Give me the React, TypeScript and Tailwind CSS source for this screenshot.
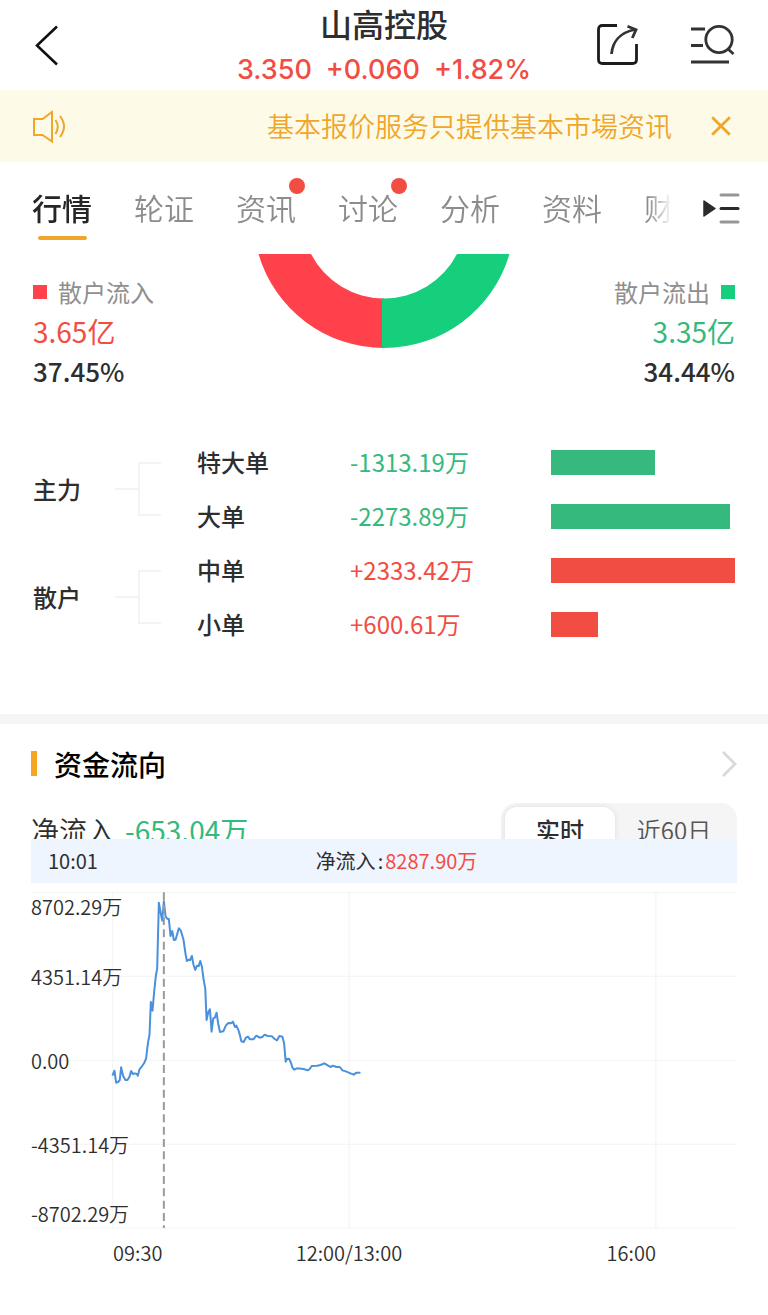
import React from "react";

type Tab = { label: string; active?: boolean; dot?: boolean };

const tabs: Tab[] = [
  { label: "行情", active: true },
  { label: "轮证" },
  { label: "资讯", dot: true },
  { label: "讨论", dot: true },
  { label: "分析" },
  { label: "资料" },
  { label: "财务" },
];

type Order = { group?: string; name: string; value: number };

const orders: Order[] = [
  { group: "主力", name: "特大单", value: -1313.19 },
  { name: "大单", value: -2273.89 },
  { group: "散户", name: "中单", value: 2333.42 },
  { name: "小单", value: 600.61 },
];

const maxOrder = 2333.42;

const flowLine =
  "277,587 283,572 288,608 294,606 299,600 303,562 309,588 316,600 322,600 328,590 333,573 338,582 344,580 350,582 353,587 358,568 366,558 372,549 378,535 381,508 384,485 388,465 392,366 397,392 402,335 407,288 411,265 416,68 421,96 426,122 431,64 436,108 441,116 446,117 451,168 456,153 461,180 466,179 476,145 482,152 490,180 496,222 500,243 505,239 510,240 515,228 520,255 525,270 530,257 535,259 540,243 545,260 550,298 555,325 559,420 564,397 569,388 574,455 579,415 584,413 589,398 594,432 599,456 609,454 617,436 624,429 632,430 638,425 644,441 648,437 655,452 659,466 663,484 670,486 677,473 683,470 689,478 699,478 708,467 718,473 726,471 733,464 742,468 755,469 763,477 770,481 777,468 786,470 791,488 796,545 800,537 806,536 812,549 816,562 821,569 830,565 850,567 862,571 868,567 874,558 890,557 900,555 912,550 922,556 930,561 938,557 948,561 958,561 966,571 978,575 990,580 1000,584 1008,578 1020,578";

function Header() {
  return (
    <header className="flex h-[90px] items-center justify-between pr-8 pl-8">
      <div className="flex w-36 justify-start">
        <button aria-label="返回" className="flex">
          <svg width="28" height="44" viewBox="0 0 28 44" fill="none" stroke="#111" strokeWidth="2.600">
            <path d="M25 3.500 L5 22.500 L25 41.500" />
          </svg>
        </button>
      </div>
      <div className="flex flex-col items-center self-start pt-0.5 whitespace-nowrap">
        <h1 className="text-[32px] leading-[42px] font-medium text-[#2e2e2e]">山高控股</h1>
        <p className="mt-1.5 flex gap-3.5 font-[Inter] text-[27px] leading-10 font-medium text-[#f24d43]">
          <span>3.350</span>
          <span>+0.060</span>
          <span>+1.82%</span>
        </p>
      </div>
      <div className="flex w-36 justify-end gap-[50px]">
        <button aria-label="分享" className="flex">
          <svg width="44" height="44" viewBox="0 0 44 44" fill="none" stroke="#1c1c1c" strokeWidth="2.800">
            <path d="M21 2.500 H6.500 Q2.500 2.500 2.500 6.500 V36.500 Q2.500 40.500 6.500 40.500 H36.500 Q40.500 40.500 40.500 36.500 V21" />
            <path d="M15.500 31 C16.500 19 24 9.500 39 6.500" stroke="#333" />
            <path d="M31.500 3.300 L40 6.700 L36.300 15" stroke="#333" />
          </svg>
        </button>
        <button aria-label="搜索" className="flex">
          <svg width="46" height="44" viewBox="0 0 46 44" fill="none" stroke="#333" strokeWidth="2.800">
            <path d="M1 6 H15 M1 22.500 H13 M1 39 H39" />
            <circle cx="29" cy="16.500" r="13.200" />
            <path d="M38 26 L43.500 31" />
          </svg>
        </button>
      </div>
    </header>
  );
}

function Notice() {
  return (
    <div className="flex h-[72px] items-center bg-[#fdfbe8] pr-[33px] pl-8 text-[#f0a52b]">
      <svg width="36" height="34" viewBox="0 0 36 34" fill="none" stroke="currentColor" strokeWidth="2" className="shrink-0">
        <path d="M2 10 H10.500 L20 3 V32.500 L10.500 26 H2 Z" />
        <path d="M23.500 11 Q28 17.500 23.500 25 M28 7 Q36 17.500 28 28" />
      </svg>
      <p className="flex-1 text-right text-[27px] leading-10 font-[350] whitespace-nowrap">基本报价服务只提供基本市場资讯</p>
      <button aria-label="关闭" className="ml-[35px] flex w-7 shrink-0 justify-center">
        <svg width="20" height="20" viewBox="0 0 20 20" fill="none" stroke="currentColor" strokeWidth="2.800">
          <path d="M1.200 1.200 L18.800 18.800 M18.800 1.200 L1.200 18.800" />
        </svg>
      </button>
    </div>
  );
}

function Tabs() {
  return (
    <div className="flex h-[92px] items-stretch justify-between pr-7 pl-8">
      <nav className="flex min-w-0 flex-1 gap-[42px] overflow-hidden [mask-image:linear-gradient(to_right,black_calc(100%_-_24px),transparent)]">
        {tabs.map((tab) => (
          <button
            key={tab.label}
            className={
              tab.active
                ? "relative flex shrink-0 flex-col items-center pt-[22px] text-[30px] leading-[46px] font-medium text-[#262626]"
                : "relative flex shrink-0 flex-col items-center pt-[22px] text-[30px] leading-[46px] font-[350] text-[#8c8c8c]"
            }
          >
            {tab.label}
            {tab.active && <span className="mt-1.5 h-1 w-[49px] rounded-full bg-[#f0a52b]" />}
            {tab.dot && <span className="absolute top-4 right-[-9px] size-4 rounded-full bg-[#f24d43]" />}
          </button>
        ))}
      </nav>
      <button aria-label="更多栏目" className="ml-[30px] flex shrink-0 items-start pt-7">
        <svg width="38" height="36" viewBox="0 0 38 36" fill="none" strokeWidth="3" strokeLinecap="round">
          <path d="M2 11 L13 18.500 L2 26 Z" fill="#2b2b2b" stroke="#2b2b2b" strokeWidth="1.500" strokeLinejoin="round" />
          <path d="M19 5 H36 M19 32 H36" stroke="#969696" />
          <path d="M19 18.500 H36" stroke="#2b2b2b" />
        </svg>
      </button>
    </div>
  );
}

function Summary() {
  return (
    <section className="flex items-start justify-between px-[33px]">
      <div className="flex w-44 flex-col pt-[19px]">
        <div className="flex items-center gap-[11px] text-2xl leading-[38px] text-[#8f8f8f]">
          <span className="size-3.5 bg-[#ff414b]" />
          散户流入
        </div>
        <strong className="text-[28px] leading-10 font-normal text-[#f24d43]">3.65亿</strong>
        <span className="text-[26px] leading-10 font-medium text-[#2e2e2e]">37.45%</span>
      </div>
      <svg width="252" height="94" viewBox="0 0 252 94" className="shrink-0">
        <path d="M0.500 0 A130.8 130.8 0 0 0 126 94 V44.500 A82 82 0 0 1 53 0 Z" fill="#ff414b" />
        <path d="M251.500 0 A130.8 130.8 0 0 1 126 94 H124 V44.500 H126 A82 82 0 0 0 199 0 Z" fill="#15cf7d" />
      </svg>
      <div className="flex w-44 flex-col items-end pt-[19px]">
        <div className="flex items-center gap-[11px] text-2xl leading-[38px] text-[#8f8f8f]">
          散户流出
          <span className="size-3.5 bg-[#15cf7d]" />
        </div>
        <strong className="text-[28px] leading-10 font-normal text-[#35b97c]">3.35亿</strong>
        <span className="text-[26px] leading-10 font-medium text-[#2e2e2e]">34.44%</span>
      </div>
    </section>
  );
}

function Orders() {
  return (
    <section className="px-[33px] pt-11 pb-[63px]">
      <table className="w-full table-fixed text-2xl text-[#2e2e2e]">
        <colgroup>
          <col className="w-[82px]" />
          <col className="w-[82px]" />
          <col className="w-[153px]" />
          <col className="w-[201px]" />
          <col />
        </colgroup>
        <tbody>
          {orders.map((o) => (
            <tr key={o.name} className="h-[54px]">
              {o.group && (
                <>
                  <th rowSpan={2} scope="rowgroup" className="p-0 text-left font-medium">
                    {o.group}
                  </th>
                  <td rowSpan={2} className="p-0">
                    <div className="flex items-center">
                      <span className="h-0.5 w-[23px] bg-[#f3f3f3]" />
                      <span className="h-[54px] w-[23px] border-2 border-r-0 border-[#f3f3f3]" />
                    </div>
                  </td>
                </>
              )}
              <th scope="row" className="p-0 text-left font-medium">
                {o.name}
              </th>
              <td className={o.value < 0 ? "p-0 text-[#35b97c]" : "p-0 text-[#f24d43]"}>
                {(o.value > 0 ? "+" : "") + o.value.toFixed(2)}万
              </td>
              <td className="p-0">
                <div
                  className={o.value < 0 ? "h-[25px] bg-[#35b97c]" : "h-[25px] bg-[#f24d43]"}
                  style={{ width: `${(Math.abs(o.value) / maxOrder) * 100}%` }}
                />
              </td>
            </tr>
          ))}
        </tbody>
      </table>
    </section>
  );
}

function FlowChart() {
  return (
    <div className="mt-[9px]">
      <div className="relative">
        <svg className="absolute inset-0 h-full w-full overflow-visible" viewBox="33 36 2115 1008" preserveAspectRatio="none" fill="none">
          <path
            d="M33 37 H2148 M33 289 H2148 M33 541 H2148 M33 793 H2148 M33 1044 H2148 M278 37 V1044 M986 37 V1044 M1905 37 V1044"
            stroke="#f3f3f3"
            strokeWidth="3"
          />
          <polyline points={flowLine} stroke="#4a90dc" strokeWidth="6" strokeLinejoin="round" />
          <path d="M431 37 V1044" stroke="#9a9a9a" strokeWidth="6" strokeDasharray="24 13" />
        </svg>
        <div className="relative grid grid-rows-[30px_110px_58px_110px_28px] items-center text-xl leading-7 font-[350] text-[#2e2e2e]">
          <span>8702.29万</span>
          <span>4351.14万</span>
          <span>0.00</span>
          <span>-4351.14万</span>
          <span>-8702.29万</span>
        </div>
      </div>
      <div className="grid grid-cols-[82fr_130fr_211fr_201fr_81fr] pt-[11px] text-xl leading-7 font-[350] whitespace-nowrap text-[#2e2e2e]">
        <span className="col-start-2">09:30</span>
        <span className="text-center">12:00/13:00</span>
        <span className="text-right">16:00</span>
      </div>
    </div>
  );
}

function CapitalFlow() {
  return (
    <section className="border-t-10 border-[#f5f5f5] px-[31px] pb-11">
      <a href="#flow" className="flex h-[79px] items-center">
        <span className="h-[25px] w-1.5 bg-[#f5a623]" />
        <h2 className="ml-[17px] flex-1 text-[28px] leading-10 font-medium text-black">资金流向</h2>
        <svg width="16" height="28" viewBox="0 0 16 28" fill="none" stroke="#d9d9d9" strokeWidth="2.800">
          <path d="M2 2 L14 14 L2 26" />
        </svg>
      </a>
      <div className="flex h-[54px] items-center justify-between">
        <p className="flex gap-2.5 text-[28px] leading-10 whitespace-nowrap">
          <span className="font-[350] text-[#2e2e2e]">净流入</span>
          <span className="text-[#35b97c]">-653.04万</span>
        </p>
        <div className="flex h-[54px] w-[236px] rounded-2xl bg-[#f5f5f5] p-1 text-2xl">
          <button className="h-[46px] w-[110px] rounded-xl bg-white font-medium text-[#2e2e2e] shadow-[0_0_6px_#00000018]">
            实时
          </button>
          <button className="flex-1 font-[350] text-[#555]">近60日</button>
        </div>
      </div>
      <div className="relative -mt-[18px] grid h-[44px] grid-cols-[1fr_auto_1fr] items-center bg-[#eef5fe] px-[17px] text-xl text-[#2e2e2e]">
        <span>10:01</span>
        <span className="ml-[25px] flex gap-0.5 whitespace-nowrap">
          <span>净流入</span>
          <span>:</span>
          <span className="text-[#f24d43]">8287.90万</span>
        </span>
      </div>
      <FlowChart />
    </section>
  );
}

export default function App() {
  return (
    <main className="min-h-screen w-full bg-white font-['Noto_Sans_CJK_SC',sans-serif]">
      <Header />
      <Notice />
      <Tabs />
      <Summary />
      <Orders />
      <CapitalFlow />
    </main>
  );
}
